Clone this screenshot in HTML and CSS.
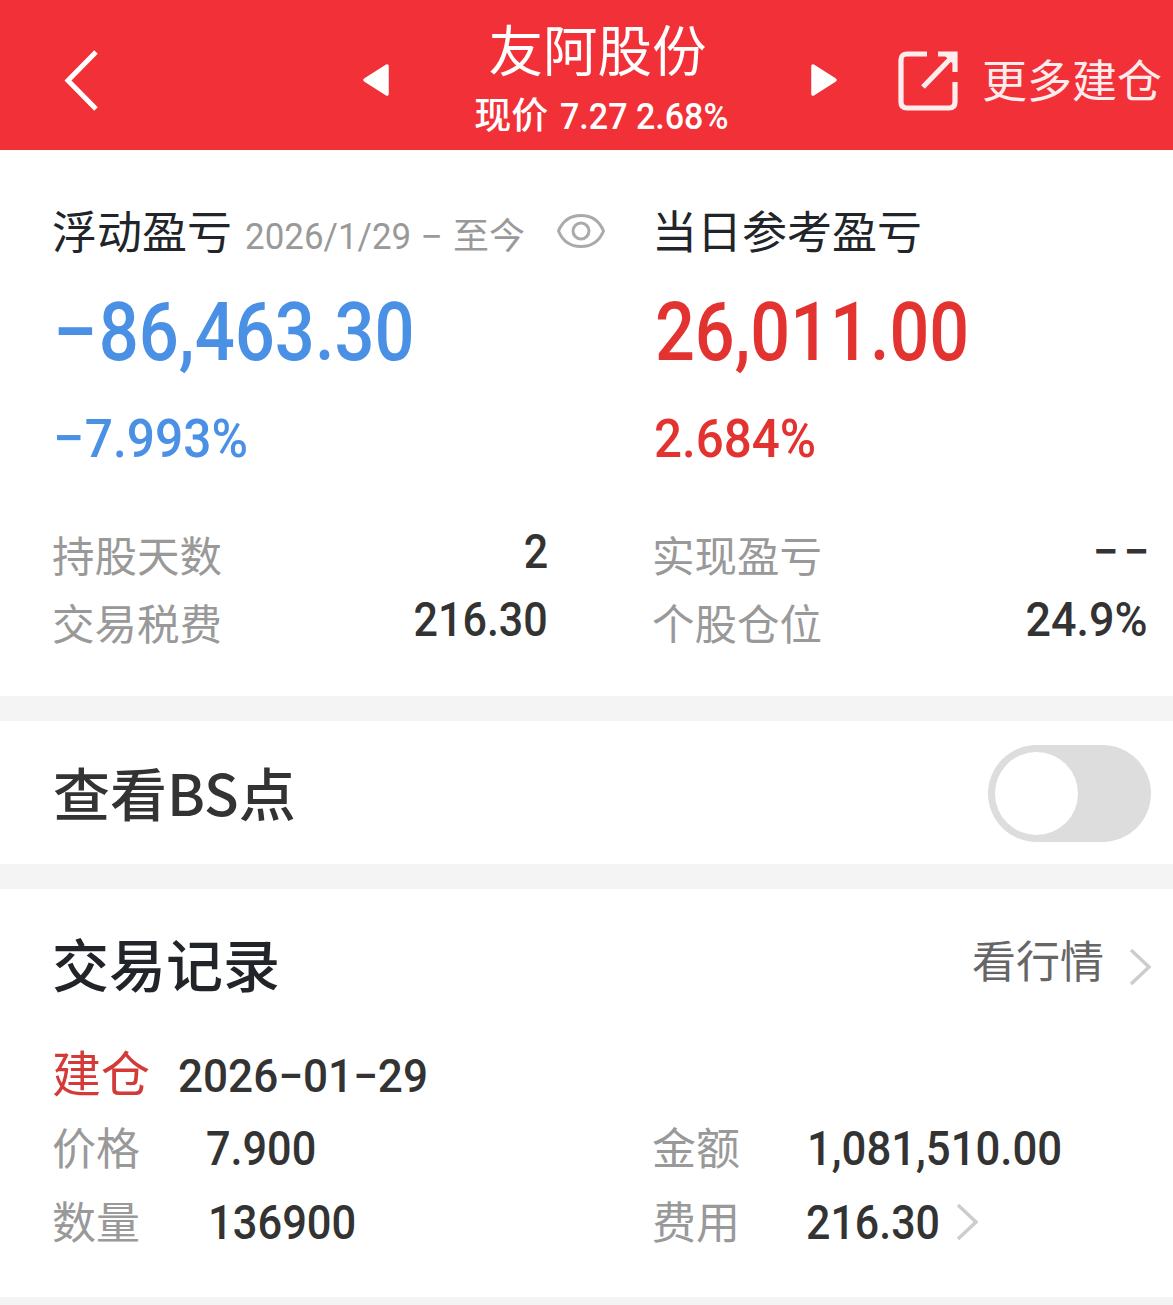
FILE: index.html
```html
<!DOCTYPE html>
<html lang="zh-CN">
<head>
    <meta charset="UTF-8">
    <meta name="viewport" content="width=device-width, initial-scale=1.0">
    <title>友阿股份</title>
    <link rel="stylesheet" href="styles.css">
</head>
<body>
    <header class="header">
        <svg class="back" width="36" height="62" viewBox="0 0 36 62">
            <path d="M32 3 L4 31.500 L32 60" fill="none" stroke="#fff" stroke-width="5"/>
        </svg>
        <svg class="prev" width="28" height="36" viewBox="0 0 28 36">
            <path d="M25 4 L3 18 L25 32 Z" fill="#fff" stroke="#fff" stroke-width="3.5" stroke-linejoin="round"/>
        </svg>
        <div class="stock">
            <h1>友阿股份</h1>
            <p>现价 <span class="num num-price">7.27 2.68%</span></p>
        </div>
        <svg class="next" width="28" height="36" viewBox="0 0 28 36">
            <path d="M3 4 L25 18 L3 32 Z" fill="#fff" stroke="#fff" stroke-width="3.5" stroke-linejoin="round"/>
        </svg>
        <div class="more">
            <svg width="60" height="60" viewBox="0 0 60 60">
                <path d="M29 3 H9 Q3 3 3 9 V51 Q3 57 9 57 H51 Q57 57 57 51 V31 M40 3 H57 V21 M55 5 L25 36" fill="none" stroke="#ffecec" stroke-width="5.2"/>
                <path d="M47 5 H56 V14 Z" fill="#ffecec"/>
            </svg>
            <span>更多建仓</span>
        </div>
    </header>

    <section class="card profit">
        <div class="col">
            <div class="label">浮动盈亏
                <span class="period"><span class="num num-period">2026/1/29 <span class="minus">−</span></span><span>至今</span></span>
                <svg class="eye" width="50" height="38" viewBox="0 0 50 38">
                    <path d="M2.500 19 C7 8 15 3.500 25 3.500 S43 8 47.500 19 C43 30 35 34.500 25 34.500 S7 30 2.500 19 Z" fill="none" stroke="#aaa" stroke-width="3"/>
                    <circle cx="25" cy="19" r="8" fill="none" stroke="#aaa" stroke-width="3"/>
                </svg>
            </div>
            <div class="amount blue"><span class="num num-float"><span class="minus">−</span>86,463.30</span></div>
            <div class="rate blue"><span class="num num-float-rate"><span class="minus">−</span>7.993%</span></div>
            <div class="stats">
                <div class="stat"><span class="key">持股天数</span><span class="num value">2</span></div>
                <div class="stat"><span class="key">交易税费</span><span class="num value">216.30</span></div>
            </div>
        </div>
        <div class="col">
            <div class="label">当日参考盈亏</div>
            <div class="amount red"><span class="num num-today">26,011.00</span></div>
            <div class="rate red"><span class="num num-today-rate">2.684%</span></div>
            <div class="stats">
                <div class="stat"><span class="key">实现盈亏</span><span class="num value value-empty">−−</span></div>
                <div class="stat"><span class="key">个股仓位</span><span class="num value value-percent">24.9%</span></div>
            </div>
        </div>
    </section>

    <section class="card bs">
        <h2>查看BS点</h2>
        <div class="switch"><div class="knob"></div></div>
    </section>

    <section class="card records">
        <div class="records-head">
            <h2>交易记录</h2>
            <div class="quote">
                <span>看行情</span>
                <svg width="22" height="38" viewBox="0 0 22 38">
                    <path d="M2 1 L20 18 L2 35" fill="none" stroke="#ccc" stroke-width="3.400"/>
                </svg>
            </div>
        </div>
        <div class="trade">
            <span class="type">建仓</span>
            <span class="num date">2026−01−29</span>
        </div>
        <div class="details">
            <div class="detail"><span class="name">价格</span><span class="num num-cost">7.900</span></div>
            <div class="detail"><span class="name">金额</span><span class="num num-total">1,081,510.00</span></div>
            <div class="detail"><span class="name">数量</span><span class="num num-count">136900</span></div>
            <div class="detail">
                <span class="name">费用</span><span class="num num-fee">216.30</span>
                <svg class="arrow" width="22" height="38" viewBox="0 0 22 38">
                    <path d="M2 1 L20 18 L2 35" fill="none" stroke="#ccc" stroke-width="3.400"/>
                </svg>
            </div>
        </div>
    </section>
</body>
</html>
```

FILE: styles.css
```css
* {
    box-sizing: border-box;
}
body {
    margin: 0;
    height: 1305px;
    overflow: hidden;
    background-color: #f4f4f4;
    font-family: Roboto, "Noto Sans CJK SC", sans-serif;
    color: #333;
}
h1, h2, p {
    margin: 0;
    font-weight: 400;
}
svg {
    display: block;
    flex: none;
}

.num {
    display: inline-block;
    font-weight: 500;
    white-space: nowrap;
    transform-origin: left center;
}
.minus {
    display: inline-block;
    margin: 0 0.05em;
    transform: scaleX(1.14);
}

/* Header */
.header {
    display: flex;
    height: 150px;
    background-color: #f13038;
    color: #fff;
}
.back {
    margin: 49px 0 0 64px;
}
.prev {
    margin: 62px 0 0 262px;
}
.stock {
    width: 420px;
    padding-top: 20px;
    text-align: center;
}
.stock h1 {
    font-size: 54.5px;
    line-height: 64px;
    padding-right: 5px;
}
.stock p {
    margin-top: 13px;
    padding-left: 17px;
    font-size: 37px;
    line-height: 40px;
    font-weight: 500;
    white-space: nowrap;
}
.num-price {
    margin-left: 2px;
    transform: scaleX(0.92);
}
.next {
    margin-top: 62px;
}
.more {
    display: flex;
    align-items: center;
    gap: 24px;
    height: 64px;
    margin: 49px 0 0 60px;
    font-size: 45px;
    line-height: 64px;
    white-space: nowrap;
    color: #ffecec;
}
.more span {
    padding-top: 4px;
}

/* Profit summary */
.card {
    background-color: #fff;
}
.profit {
    display: grid;
    grid-template-columns: 600px 496px;
    height: 546px;
    padding: 54px 0 0 52px;
}
.label {
    display: flex;
    align-items: baseline;
    height: 60px;
    font-size: 45px;
    line-height: 60px;
    color: #212529;
    white-space: nowrap;
}
.period {
    display: flex;
    width: 311px;
    margin-left: 13px;
    font-size: 36px;
    color: #999;
}
.num-period {
    width: 208px;
    font-weight: 400;
    transform: scaleX(0.97);
}
.eye {
    align-self: center;
    margin-bottom: 6px;
}
.amount {
    height: 90px;
    margin-top: 23px;
    font-size: 82px;
    line-height: 90px;
}
.rate {
    height: 60px;
    margin-top: 31px;
    font-size: 54.5px;
    line-height: 60px;
}
.blue {
    color: #4a90e5;
}
.red {
    color: #e33331;
}
.num-float {
    transform: scaleX(0.86);
}
.num-float-rate {
    transform: scaleX(0.91);
}
.num-today {
    margin-left: 3px;
    transform: scaleX(0.855);
}
.num-today-rate {
    margin-left: 2px;
    transform: scaleX(0.905);
}
.stats {
    width: 496px;
    margin-top: 50px;
}
.stat {
    display: flex;
    justify-content: space-between;
    height: 68px;
    line-height: 68px;
}
.key {
    padding-top: 6px;
    font-size: 42.5px;
    color: #999;
}
.value {
    font-size: 48px;
    transform-origin: right center;
    transform: scaleX(0.896);
}
.value-empty {
    margin-right: -6px;
    letter-spacing: 5px;
    transform: scaleX(0.96);
}
.value-percent {
    transform: scaleX(0.935);
}

/* BS switch */
.bs {
    display: flex;
    align-items: center;
    justify-content: space-between;
    height: 143px;
    margin-top: 25px;
    padding: 1px 22px 0 53px;
}
h2 {
    font-size: 57px;
    line-height: 70px;
    font-weight: 500;
}
.bs h2 {
    padding-bottom: 5px;
    font-family: "Noto Sans CJK SC", sans-serif;
}
.switch {
    width: 163px;
    height: 97px;
    padding: 7px;
    border-radius: 49px;
    background-color: #ddd;
}
.knob {
    width: 83px;
    height: 83px;
    border-radius: 50%;
    background-color: #fff;
}

/* Trade records */
.records {
    height: 408px;
    margin-top: 25px;
    padding: 44px 22px 0 52px;
}
.records-head {
    display: flex;
    justify-content: space-between;
    height: 70px;
}
.records-head h2 {
    color: #212529;
}
.quote {
    display: flex;
    align-items: center;
    gap: 25px;
    font-size: 44px;
    line-height: 61px;
    color: #666;
}
.quote span {
    height: 70px;
}
.trade {
    display: flex;
    align-items: baseline;
    height: 60px;
    margin-top: 43px;
    line-height: 60px;
}
.type {
    width: 126px;
    font-size: 49px;
    color: #d43a38;
}
.date {
    font-size: 46px;
    transform: scaleX(0.958);
}
.details {
    display: grid;
    grid-template-columns: 600px 1fr;
    margin-top: 6px;
}
.detail {
    display: flex;
    align-items: center;
    height: 74px;
    font-size: 48px;
    line-height: 74px;
}
.name {
    width: 154px;
    padding-top: 2px;
    font-size: 44px;
    color: #999;
}
.num-cost {
    transform: scaleX(0.9);
}
.num-total {
    margin-left: 1px;
    transform: scaleX(0.91);
}
.num-count {
    margin-left: 2px;
    transform: scaleX(0.906);
}
.num-fee {
    width: 150px;
    transform: scaleX(0.895);
}
```
